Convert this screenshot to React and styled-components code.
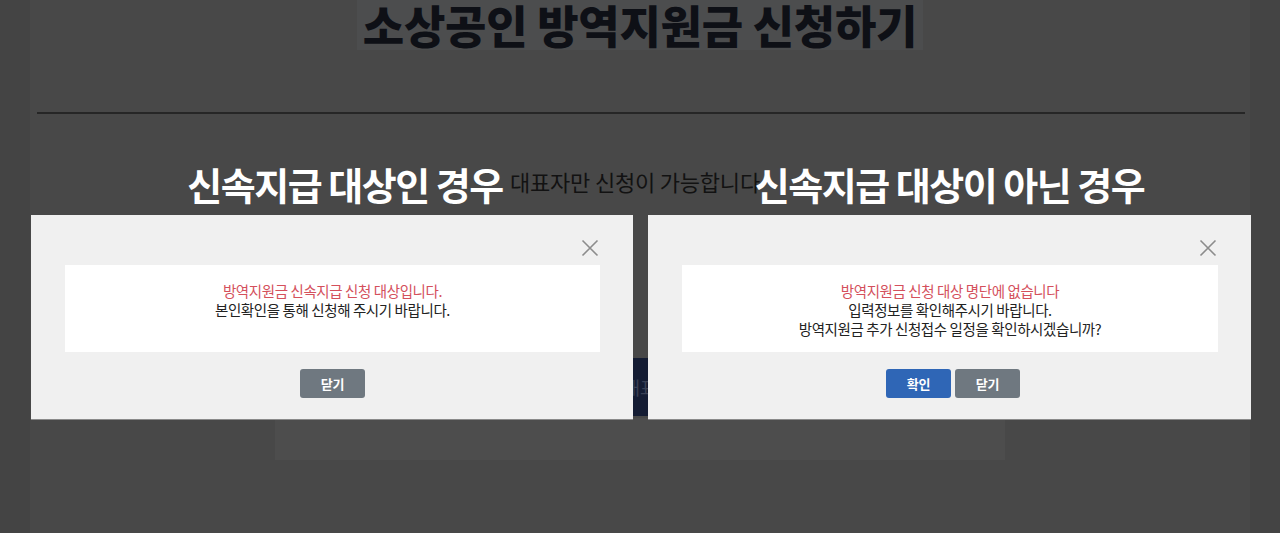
import React from 'react';
import styled, { createGlobalStyle } from 'styled-components';

const GlobalStyle = createGlobalStyle`
    html, body {
        margin: 0;
        padding: 0;
        background: #444444;
        font-family: "Noto Sans CJK KR", "Noto Sans", sans-serif;
    }
`;

const Screen = styled.div`
    position: relative;
    width: 1280px;
    height: 533px;
    overflow: hidden;
    background: #444444;
    padding: 0 30px;
    box-sizing: border-box;
`;

const Page = styled.div`
    height: 100%;
    background: #484848;
    display: flex;
    flex-direction: column;
    align-items: center;
`;

const TitleBox = styled.div`
    height: 50px;
    padding: 0 6px;
    background: #4c4d4e;
    display: flex;
    align-items: center;
    h1{
        margin: 0;
        font-size: 45px;
        font-weight: 900;
        letter-spacing: -0.3px;
        line-height: 48px;
        color: #0e1016;
    }
`;

const Divider = styled.hr`
    align-self: stretch;
    margin: 62px 5px 0 7px;
    border: none;
    height: 2px;
    background: #262626;
`;

const Notice = styled.p`
    margin: 52px 0 0 480px;
    align-self: flex-start;
    font-size: 22px;
    line-height: 30px;
    color: #121212;
    letter-spacing: -0.2px;
`;

const PageButton = styled.div`
    margin-top: 162px;
    width: 170px;
    height: 58px;
    background: #141c33;
    color: #3a4155;
    font-size: 18px;
    display: flex;
    align-items: center;
    justify-content: center;
`;

const GhostBox = styled.div`
    width: 730px;
    height: 42px;
    margin-top: 2px;
    background: #4d4d4d;
`;

const Overlay = styled.div`
    position: absolute;
    top: 158px;
    left: 31px;
    display: flex;
    gap: 15px;
`;

const Column = styled.div`
    width: ${({w}) => w}px;
    display: flex;
    flex-direction: column;
`;

const Label = styled.div`
    height: 57px;
    padding-left: ${({shift}) => shift || 0}px;
    text-align: center;
    font-size: 38px;
    font-weight: 700;
    line-height: 52px;
    letter-spacing: -1.5px;
    white-space: nowrap;
    color: #ffffff;
`;

const Dialog = styled.div`
    position: relative;
    height: 204px;
    background: #f0f0f0;
    box-shadow: 0 1px 0 #8a8a8a;
    padding: 50px 33px 0 34px;
    box-sizing: border-box;
    display: flex;
    flex-direction: column;
    align-items: center;
`;

const CloseButton = styled.button`
    position: absolute;
    top: 24px;
    right: 34px;
    width: 18px;
    height: 18px;
    padding: 0;
    border: none;
    background: none;
    display: flex;
`;

const MessageBox = styled.div`
    align-self: stretch;
    height: 87px;
    background: #ffffff;
    padding-top: 16px;
    box-sizing: border-box;
    text-align: center;
    font-size: 14.5px;
    line-height: 19px;
    letter-spacing: -0.4px;
    color: #222222;
    p{
        margin: 0;
    }
    .alert{
        color: #d4505c;
    }
`;

const Buttons = styled.div`
    margin-top: 17px;
    padding-left: ${({shift}) => shift || 0}px;
    display: flex;
    gap: 4px;
`;

const Button = styled.button`
    width: 65px;
    height: 29px;
    border: none;
    border-radius: 3px;
    background: ${({primary}) => primary ? '#2f66b6' : '#6f7880'};
    color: #ffffff;
    font-family: inherit;
    font-size: 13px;
    font-weight: 700;
    letter-spacing: -0.3px;
`;

const CloseIcon = () => (
    <svg width="18" height="18" viewBox="0 0 18 18" fill="none" stroke="#8c8c8c" strokeWidth="1.6">
        <path d="M1.5 1.5 L16.5 16.5 M16.5 1.5 L1.5 16.5" />
    </svg>
);

const App = () => {
    return (
        <Screen>
            <GlobalStyle />
            <Page>
                <TitleBox><h1>소상공인 방역지원금 신청하기</h1></TitleBox>
                <Divider />
                <Notice>대표자만 신청이 가능합니다</Notice>
                <PageButton>대표</PageButton>
                <GhostBox />
            </Page>
            <Overlay>
                <Column w={602}>
                    <Label shift={26}>신속지급 대상인 경우</Label>
                    <Dialog>
                        <CloseButton aria-label="닫기"><CloseIcon /></CloseButton>
                        <MessageBox>
                            <p className="alert">방역지원금 신속지급 신청 대상입니다.</p>
                            <p>본인확인을 통해 신청해 주시기 바랍니다.</p>
                        </MessageBox>
                        <Buttons>
                            <Button>닫기</Button>
                        </Buttons>
                    </Dialog>
                </Column>
                <Column w={603}>
                    <Label>신속지급 대상이 아닌 경우</Label>
                    <Dialog>
                        <CloseButton aria-label="닫기"><CloseIcon /></CloseButton>
                        <MessageBox>
                            <p className="alert">방역지원금 신청 대상 명단에 없습니다</p>
                            <p>입력정보를 확인해주시기 바랍니다.</p>
                            <p>방역지원금 추가 신청접수 일정을 확인하시겠습니까?</p>
                        </MessageBox>
                        <Buttons shift={6}>
                            <Button primary>확인</Button>
                            <Button>닫기</Button>
                        </Buttons>
                    </Dialog>
                </Column>
            </Overlay>
        </Screen>
    );
};

export default App;
